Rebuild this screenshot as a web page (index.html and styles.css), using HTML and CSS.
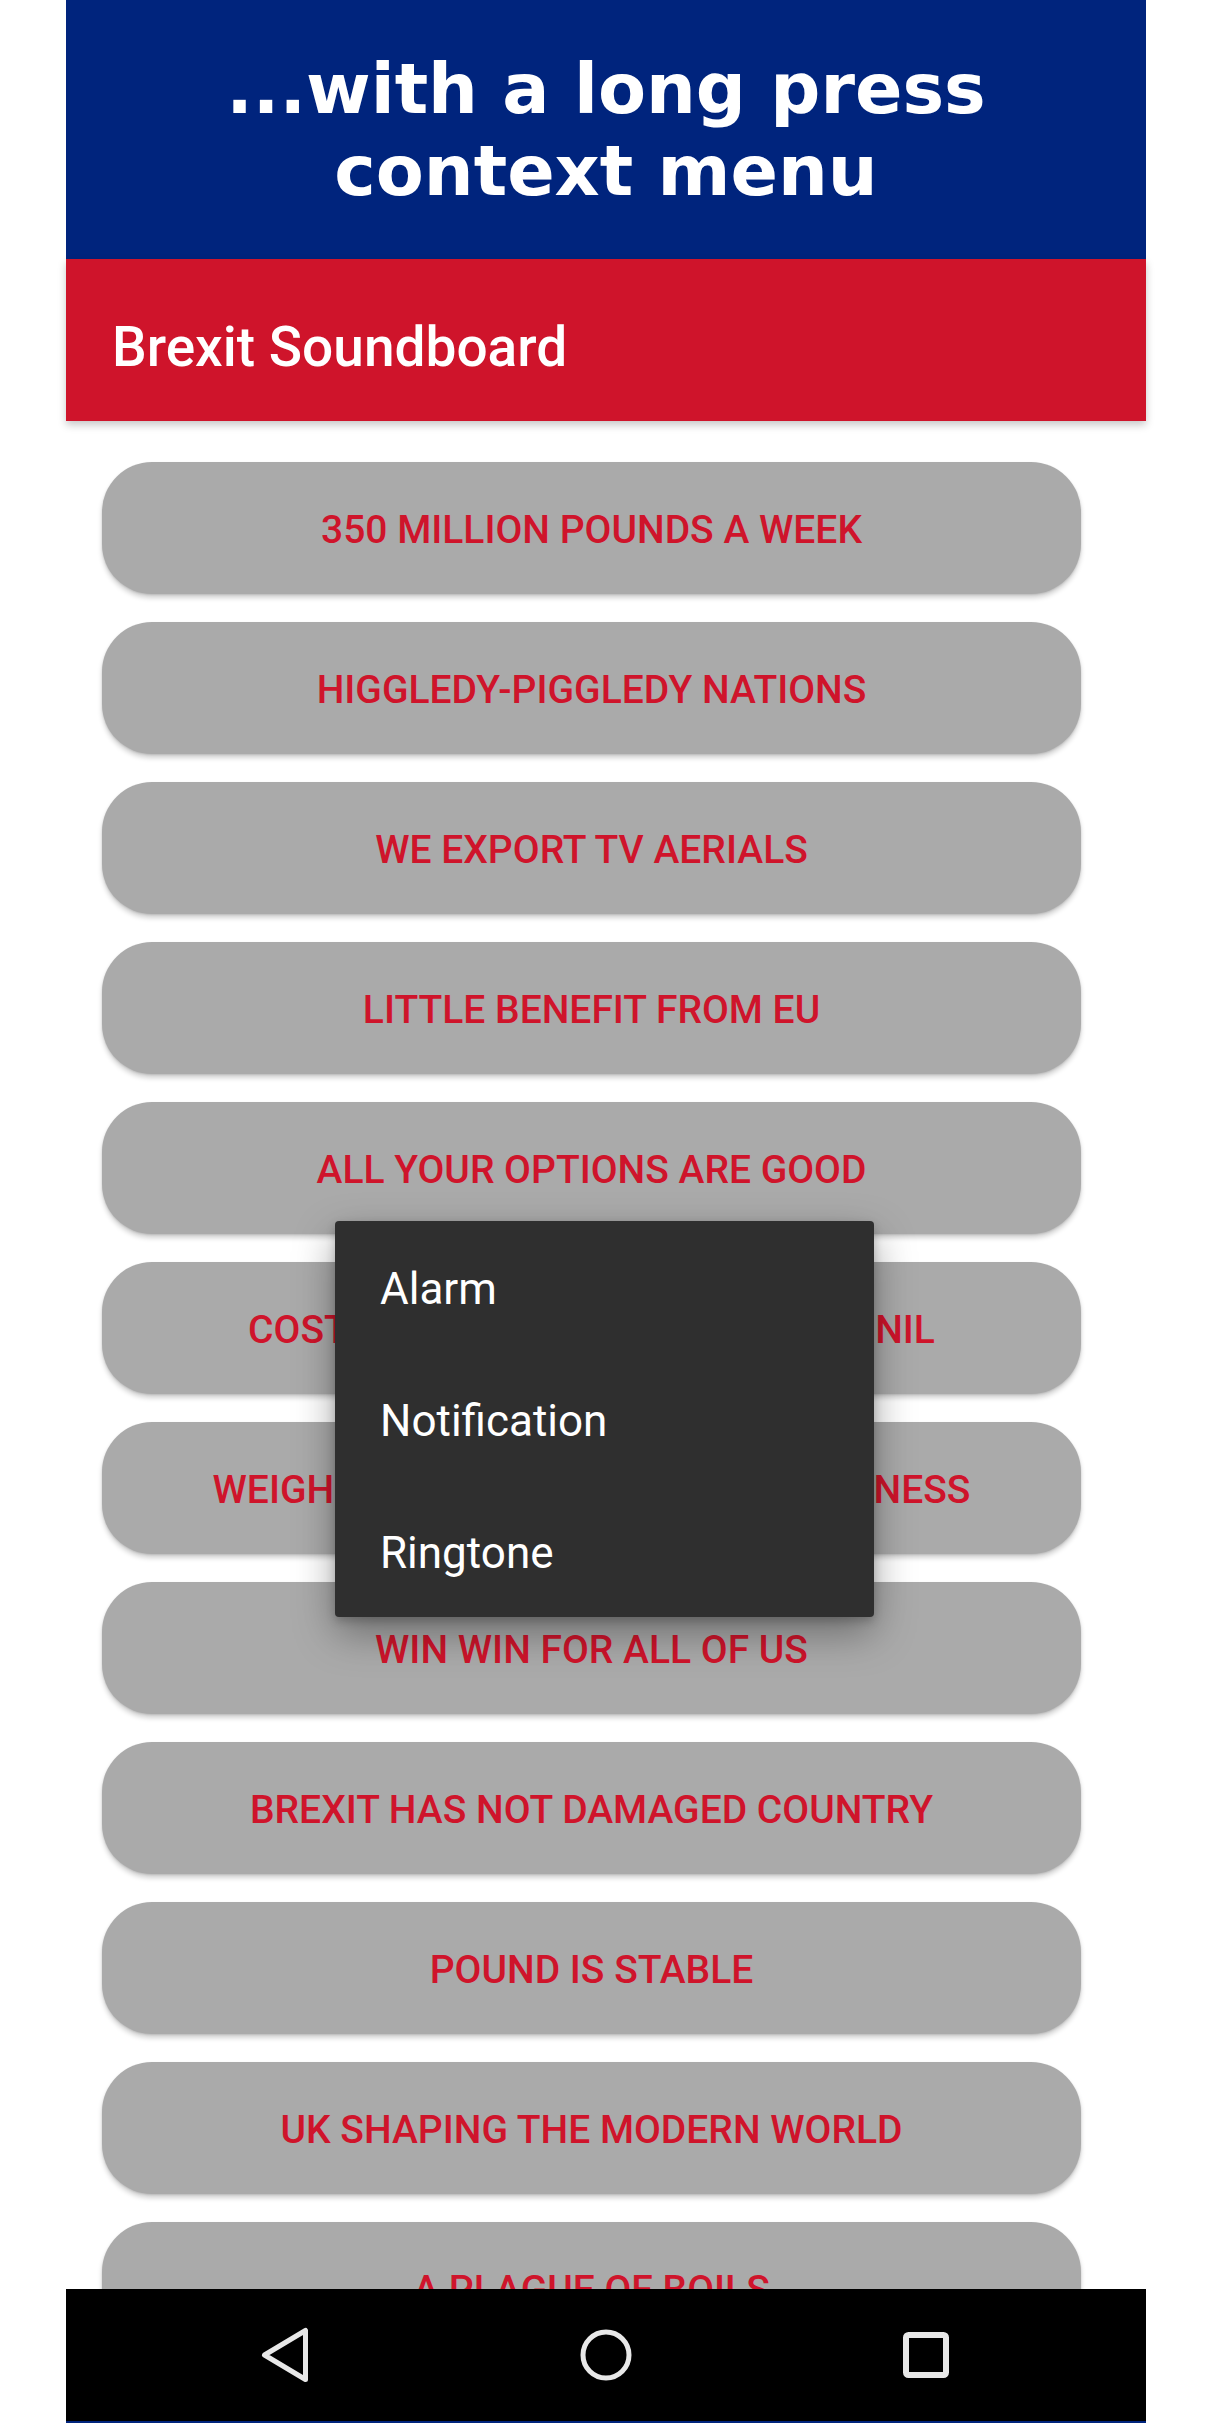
FILE: index.html
```html
<!DOCTYPE html>
<html lang="en">
<head>
<meta charset="utf-8">
<title>Brexit Soundboard</title>
<link rel="stylesheet" href="styles.css">
</head>
<body>
<div class="phone">
  <header class="promo">
    <h1 class="promo-title">...with a long press<br>context menu</h1>
  </header>
  <div class="appbar">
    <span class="appbar-title">Brexit Soundboard</span>
  </div>
  <main class="list">
    <button class="sound">350 MILLION POUNDS A WEEK</button>
    <button class="sound">HIGGLEDY-PIGGLEDY NATIONS</button>
    <button class="sound">WE EXPORT TV AERIALS</button>
    <button class="sound">LITTLE BENEFIT FROM EU</button>
    <button class="sound">ALL YOUR OPTIONS ARE GOOD</button>
    <button class="sound">COST OF LEAVING THE EU WILL BE NIL</button>
    <button class="sound">WEIGHING HEAVILY ON BRITISH BUSINESS</button>
    <button class="sound">WIN WIN FOR ALL OF US</button>
    <button class="sound">BREXIT HAS NOT DAMAGED COUNTRY</button>
    <button class="sound">POUND IS STABLE</button>
    <button class="sound">UK SHAPING THE MODERN WORLD</button>
    <button class="sound">A PLAGUE OF BOILS</button>
  </main>
  <div class="context-menu">
    <div class="menu-item">Alarm</div>
    <div class="menu-item">Notification</div>
    <div class="menu-item">Ringtone</div>
  </div>
  <nav class="navbar">
    <div class="nav-btn">
      <svg width="60" height="60" viewBox="0 0 60 60"><path d="M49.5 5.5 L49.5 54.5 L8.5 30 Z" fill="none" stroke="#e8e8e8" stroke-width="5" stroke-linejoin="round"/></svg>
    </div>
    <div class="nav-btn">
      <svg width="60" height="60" viewBox="0 0 60 60"><circle cx="30" cy="30" r="23" fill="none" stroke="#e8e8e8" stroke-width="5"/></svg>
    </div>
    <div class="nav-btn">
      <svg width="60" height="60" viewBox="0 0 60 60"><rect x="10" y="10" width="40" height="40" rx="2.5" fill="none" stroke="#e8e8e8" stroke-width="6"/></svg>
    </div>
  </nav>
  <div class="strip"></div>
</div>
</body>
</html>
```
FILE: styles.css
```css
html, body {
  margin: 0;
  padding: 0;
  background: #ffffff;
}

.phone {
  position: relative;
  width: 1080px;
  margin: 0 auto;
  background: #ffffff;
}

.promo {
  height: 259px;
  background: #00247d;
  display: flex;
  align-items: center;
  justify-content: center;
}

.promo-title {
  margin: 0;
  color: #ffffff;
  font-family: "DejaVu Sans", sans-serif;
  font-weight: bold;
  font-size: 70px;
  line-height: 82px;
  text-align: center;
}

.appbar {
  position: relative;
  z-index: 2;
  height: 162px;
  box-sizing: border-box;
  padding: 14px 0 0 46px;
  background: #cf142b;
  display: flex;
  align-items: center;
  box-shadow: 0 4px 8px rgba(0, 0, 0, 0.22);
}

.appbar-title {
  color: #ffffff;
  font-family: Roboto, "Liberation Sans", sans-serif;
  font-weight: 500;
  font-size: 55px;
}

.list {
  height: 1868px;
  box-sizing: border-box;
  padding: 41px 0 0 36px;
  overflow: hidden;
  display: flex;
  flex-direction: column;
  gap: 28px;
}

.sound {
  flex: none;
  width: 979px;
  height: 132px;
  border: none;
  border-radius: 50px;
  background: #aaaaaa;
  color: #cf142b;
  font-family: Roboto, "Liberation Sans", sans-serif;
  font-weight: 500;
  font-size: 39px;
  padding: 4px 0 0;
  text-align: center;
  white-space: nowrap;
  box-shadow: 0 4px 5px rgba(0, 0, 0, 0.18), 0 1px 2px rgba(0, 0, 0, 0.12);
}

.context-menu {
  position: absolute;
  left: 269px;
  top: 1221px;
  width: 539px;
  background: #2f2f2f;
  border-radius: 4px;
  box-shadow: 0 16px 40px rgba(0, 0, 0, 0.36), 0 4px 10px rgba(0, 0, 0, 0.2);
  z-index: 5;
}

.menu-item {
  height: 132px;
  box-sizing: border-box;
  padding: 4px 0 0 45px;
  display: flex;
  align-items: center;
  color: #ffffff;
  font-family: Roboto, "Liberation Sans", sans-serif;
  font-size: 44px;
}

.navbar {
  height: 132px;
  background: #000000;
  display: flex;
  justify-content: center;
  align-items: center;
  position: relative;
  z-index: 3;
}

.nav-btn {
  width: 320px;
  display: flex;
  justify-content: center;
  align-items: center;
}

.nav-btn svg {
  display: block;
}

.strip {
  height: 2px;
  background: #00247d;
}
```
